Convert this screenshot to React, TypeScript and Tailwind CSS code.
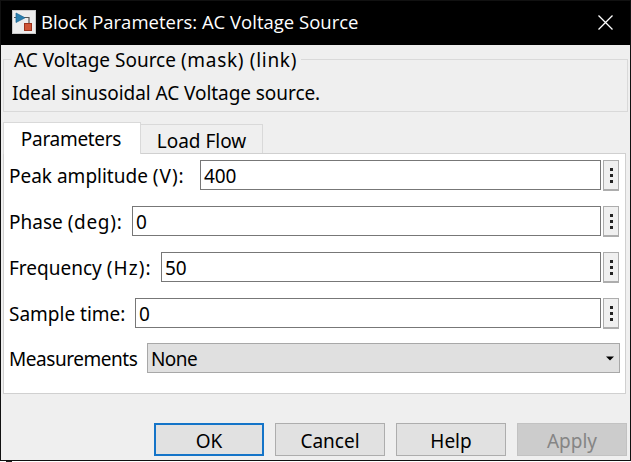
import type { ReactNode } from "react";

function Field({ label, width, value }: { label: ReactNode; width: string; value: string }) {
  return (
    <div className="flex h-[31px] items-start">
      <label className={`shrink-0 whitespace-nowrap leading-[33px] ${width}`}>{label}</label>
      <div className="h-[30px] flex-1 border border-[#777] bg-white pl-[3px] leading-[30px] tracking-[-0.1px]">{value}</div>
      <button className="ml-[2px] flex h-[31px] w-4 flex-col items-center gap-[3px] border border-b-2 border-[#adadad] bg-[#f0f0f0] pt-[7px]">
        <span className="size-[3px] bg-[#222]" />
        <span className="size-[3px] bg-[#222]" />
        <span className="size-[3px] bg-[#222]" />
      </button>
    </div>
  );
}

function DialogButton({ children, look }: { children: ReactNode; look: string }) {
  return <button className={`flex h-[33px] w-[110px] items-center justify-center pt-[4px] ${look}`}>{children}</button>;
}

export default function App() {
  return (
    <div className="flex h-[462px] w-[631px] flex-col overflow-hidden bg-white font-['Noto_Sans','DejaVu_Sans',sans-serif] text-[19px] text-black">
      <div className="flex h-[461px] flex-col border border-[#111] bg-[#efefef]">
        <header className="flex h-11 shrink-0 items-center bg-black pl-[11px] pr-[17px] text-white">
          <svg width="24" height="24" viewBox="0 0 24 24" className="relative -top-px shrink-0">
            <rect width="24" height="24" fill="#c9c9c9" />
            <rect x="1" y="1" width="22" height="22" fill="#ededed" />
            <path d="M2 7.500h2M12 7.500h5v6" fill="none" stroke="#555" strokeWidth="1.200" />
            <path d="M4 3l9 4.800L4 12.500z" fill="#2b7fae" stroke="#17628f" strokeWidth=".7" />
            <rect x="12.500" y="13.500" width="7" height="7" fill="#cf5536" stroke="#9c321b" />
          </svg>
          <h1 className="ml-[5px] flex-1 whitespace-nowrap pb-[2px] font-['Open_Sans','Noto_Sans',sans-serif] text-[18.500px]">
            Block Parameters: AC Voltage Source
          </h1>
          <svg width="15" height="15" viewBox="0 0 15 15" fill="none" stroke="white" strokeWidth="1.300" className="relative -top-px">
            <path d="M.5.500l14 14M14.500.500l-14 14" />
          </svg>
        </header>

        <fieldset className="ml-[2px] mr-[2px] h-[67px] shrink-0 border border-[#d9d9d9] pl-2">
          <legend className="ml-[-1px] h-[29px] whitespace-nowrap pl-[3px] pr-1 leading-[30px]">
            AC Voltage Source <span className="tracking-[0.7px]">(mask) (link)</span>
          </legend>
          <p className="mt-[4px] whitespace-nowrap leading-[30px] tracking-[-0.060px]">Ideal sinusoidal AC Voltage source.</p>
        </fieldset>

        <div className="ml-[2px] mt-[9px] flex h-8 shrink-0 items-end">
          <div className="z-10 mb-[-1px] h-[32px] w-[138px] border border-b-0 border-[#d9d9d9] bg-white pr-[2px] text-center leading-[33px] tracking-[-0.300px]">Parameters</div>
          <div className="h-[29px] w-[122px] border border-b-0 border-l-0 border-[#d9d9d9] text-center leading-[32px]">Load Flow</div>
        </div>

        <main className="ml-[2px] flex h-[241px] w-[623px] shrink-0 flex-col gap-[15px] border border-[#d0d0d0] bg-white pl-[5px] pr-[6px] pt-[6px]">
          <Field label={<>Peak amplitude <span className="tracking-[1px]">(V):</span></>} width="w-[191px]" value="400" />
          <Field label={<>Phase <span className="tracking-[0.700px]">(deg):</span></>} width="w-[123px]" value="0" />
          <Field label={<>Frequency <span className="tracking-[1.1px]">(Hz):</span></>} width="w-[152px]" value="50" />
          <Field label="Sample time:" width="w-[126px]" value="0" />
          <div className="-mt-px mr-[-1px] flex h-[30px]">
            <label className="w-[138px] shrink-0 leading-[32px] tracking-[-0.450px]">Measurements</label>
            <div className="flex flex-1 items-center border border-[#a8a8a8] bg-[#e0e0e0] pl-[3px] pr-[5px]">
              <span className="flex-1 pt-[2px] tracking-[-0.600px]">None</span>
              <svg width="8" height="5" viewBox="0 0 8 5"><path d="M0 .500h8L4 4.500z" /></svg>
            </div>
          </div>
        </main>

        <footer className="mr-[3px] mt-[29px] flex shrink-0 justify-end gap-[11px]">
          <DialogButton look="border-2 border-[#1474c8] bg-[#e1e1e1]">OK</DialogButton>
          <DialogButton look="border border-[#adadad] bg-[#e1e1e1]">Cancel</DialogButton>
          <DialogButton look="border border-[#adadad] bg-[#e1e1e1]">Help</DialogButton>
          <DialogButton look="border border-[#c2c2c2] bg-[#cccccc] text-[#858585]">Apply</DialogButton>
        </footer>
      </div>
      <div className="ml-[6px] h-px w-[6px] bg-[#222]" />
    </div>
  );
}
